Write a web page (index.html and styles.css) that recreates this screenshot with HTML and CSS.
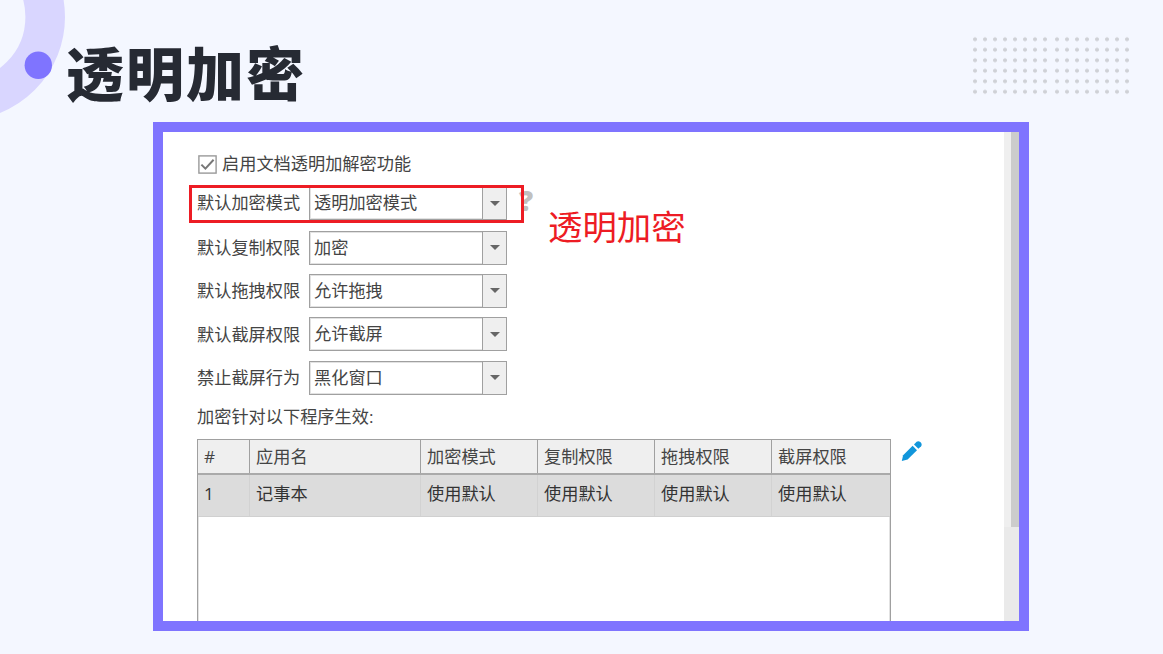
FILE: index.html
```html
<!DOCTYPE html>
<html lang="zh-CN">
<head>
    <meta charset="UTF-8">
    <meta name="viewport" content="width=device-width, initial-scale=1.0">
    <title>透明加密</title>
    <link rel="stylesheet" href="styles.css">
</head>
<body>
    <svg class="ring" width="70" height="120" viewBox="0 0 70 120">
        <circle cx="-38.4" cy="17" r="83.6" fill="none" stroke="#d9d6ff" stroke-width="39.6"/>
        <circle cx="38.3" cy="65.3" r="13.7" fill="#7f74ff"/>
    </svg>
    <header class="header">
        <h1>透明加密</h1>
        <div class="dots">
            <div class="dot-group"></div>
            <div class="dot-group"></div>
        </div>
    </header>

    <main class="frame">
        <div class="content">
            <label class="check-row">
                <svg class="checkbox" width="19" height="19" viewBox="0 0 19 19">
                    <rect x="0.9" y="0.9" width="17.2" height="17.2" fill="#fff" stroke="#999" stroke-width="1.4"/>
                    <path d="M3.4 9.6 L7.4 13.6 L15.6 4.8" fill="none" stroke="#777" stroke-width="2"/>
                </svg>
                <span>启用文档透明加解密功能</span>
            </label>

            <div class="form">
                <div class="field marked">
                    <span class="label">默认加密模式</span>
                    <div class="select"><span class="value">透明加密模式</span><span class="arrow"></span></div>
                    <span class="help">?</span>
                    <div class="highlight"></div>
                    <div class="note">透明加密</div>
                </div>
                <div class="field">
                    <span class="label">默认复制权限</span>
                    <div class="select"><span class="value">加密</span><span class="arrow"></span></div>
                </div>
                <div class="field">
                    <span class="label">默认拖拽权限</span>
                    <div class="select"><span class="value">允许拖拽</span><span class="arrow"></span></div>
                </div>
                <div class="field">
                    <span class="label">默认截屏权限</span>
                    <div class="select"><span class="value">允许截屏</span><span class="arrow"></span></div>
                </div>
                <div class="field">
                    <span class="label">禁止截屏行为</span>
                    <div class="select"><span class="value">黑化窗口</span><span class="arrow"></span></div>
                </div>
            </div>

            <p class="caption">加密针对以下程序生效:</p>

            <div class="table-row">
                <div class="table">
                    <div class="row head">
                        <span>#</span>
                        <span>应用名</span>
                        <span>加密模式</span>
                        <span>复制权限</span>
                        <span>拖拽权限</span>
                        <span>截屏权限</span>
                    </div>
                    <div class="row selected">
                        <span>1</span>
                        <span>记事本</span>
                        <span>使用默认</span>
                        <span>使用默认</span>
                        <span>使用默认</span>
                        <span>使用默认</span>
                    </div>
                </div>
                <svg class="edit" width="22" height="22" viewBox="0 0 22 22" fill="#1296db">
                    <path d="M0.8 21 L2.1 15.2 L11.6 5.8 L16 10.2 L6.6 19.6 Z"/>
                    <path d="M13 4.4 L15.6 1.8 Q17.4 0.4 19.3 2.1 Q21.6 4.4 20.1 6.2 L17.4 8.8 Z"/>
                </svg>
            </div>
        </div>
        <div class="scrollbar">
            <div class="thumb"></div>
        </div>
    </main>
</body>
</html>
```
FILE: styles.css
```css
* {
    box-sizing: border-box;
}

body {
    margin: 0;
    width: 1163px;
    height: 654px;
    overflow: hidden;
    background-color: #f4f7ff;
    color: #444;
    font-family: "Open Sans", "Noto Sans CJK SC", sans-serif;
    font-size: 17.2px;
    line-height: 24px;
}

/* decoration in the top left corner */
.ring {
    position: absolute;
    left: 0;
    top: 0;
}

.header {
    position: relative;
    display: flex;
    justify-content: space-between;
    height: 122px;
    padding: 34px 31px 0 66px;
}

h1 {
    margin: -3px 0 0;
    color: #262a33;
    font-family: "Noto Sans CJK SC", sans-serif;
    font-size: 58px;
    font-weight: 900;
    line-height: 80px;
    letter-spacing: 2px;
}

.dots {
    display: flex;
    gap: 2.4px;
}

.dot-group {
    width: 80px;
    height: 63px;
    background-image: radial-gradient(circle, #cfd1d6 1.6px, transparent 2.3px);
    background-size: 10px 10.5px;
}

.frame {
    display: flex;
    width: 876px;
    height: 509px;
    margin-left: 153px;
    border: 10px solid #7f74ff;
    background-color: #fff;
    overflow: hidden;
}

.content {
    flex: 1;
    padding: 20px 0 0 34px;
}

.check-row {
    display: flex;
    align-items: center;
    gap: 5px;
    height: 24px;
    padding-left: 1px;
}

.form {
    display: flex;
    flex-direction: column;
    gap: 9px;
    margin-top: 10px;
}

.field {
    position: relative;
    display: flex;
    align-items: center;
    height: 34.3px;
}

.marked {
    margin-bottom: 1.2px;
}

.label {
    width: 112px;
    padding-top: 1px;
}

.marked .label {
    padding: 0;
}

.select {
    display: flex;
    width: 198px;
    height: 34px;
    border: 1px solid #a0a0a0;
    box-shadow: inset 0 0 0 1px #e2e2e2;
    background-color: #fff;
}

.value {
    flex: 1;
    padding-left: 4px;
    line-height: 31px;
}

.arrow {
    display: flex;
    align-items: center;
    justify-content: center;
    width: 24px;
    border-left: 1px solid #a0a0a0;
    background-color: #efefef;
}

.arrow::before {
    content: "";
    border: 5px solid transparent;
    border-top-color: #666;
    border-bottom: 0;
}

.help {
    margin: -6px 0 0 12px;
    color: #c0c0c0;
    font-size: 28px;
    font-weight: 800;
}

/* red marking drawn over the first field */
.highlight {
    position: absolute;
    left: -8px;
    top: -1px;
    width: 335px;
    height: 38px;
    border: 3px solid #ed1c24;
}

.note {
    position: absolute;
    left: 351px;
    top: 17px;
    color: #ed1c24;
    font-size: 34.4px;
    line-height: 48px;
}

.caption {
    margin: 10px 0;
}

.table-row {
    display: flex;
    align-items: flex-start;
    gap: 10px;
}

.table {
    width: 694px;
    height: 200px;
    border: 1px solid #a0a0a0;
    box-shadow: inset 0 0 0 1px #e2e2e2;
}

.row {
    display: grid;
    grid-template-columns: 52px 171px 117px 117px 117px 1fr;
}

.row span {
    padding-left: 6px;
    border-right: 1px solid #a0a0a0;
}

.row span:last-child {
    border-right: 0;
}

.head {
    background-color: #efefef;
    border-bottom: 2px solid #aaa;
    line-height: 33px;
}

.selected {
    background-color: #dcdcdc;
    border-bottom: 1px solid #d0d0d0;
    color: #333;
    line-height: 38px;
}

.selected span {
    padding-bottom: 3px;
    border-right-color: #d2d2d2;
}

.edit {
    margin-top: 1px;
}

.scrollbar {
    width: 15px;
    background-color: #eaeaea;
}

.thumb {
    height: 395px;
    border-left: 7px solid #efefef;
    background-color: #ccc;
}
```
